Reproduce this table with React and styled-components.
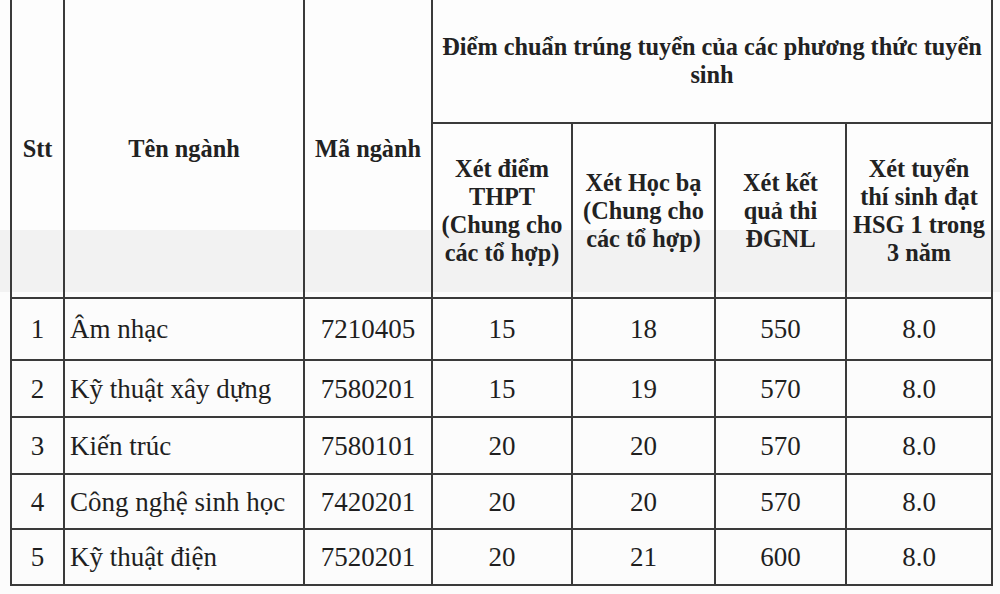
import React from "react";
import styled, { createGlobalStyle } from "styled-components";

const serif = `"Liberation Serif", "Times New Roman", serif`;

const Global = createGlobalStyle`
  html, body { margin: 0; padding: 0; }
  body {
    width: 1000px;
    height: 594px;
    overflow: hidden;
    background: linear-gradient(
      to bottom,
      #fdfdfd 0px,
      #fdfdfd 230px,
      #f2f2f2 230px,
      #f2f2f2 292px,
      #fcfcfc 292px,
      #fcfcfc 100%
    );
    font-family: ${serif};
    color: #1c1c1c;
  }
`;

const Page = styled.div`
  padding: 0 0 0 10px;
`;

const Table = styled.table`
  border-collapse: collapse;
  table-layout: fixed;
  width: 983px;
  margin-top: -2px;
  border: 2px solid #3a3a3a;
  font-family: ${serif};
`;

const HeadRow = styled.tr`
  height: ${(p) => p.$h}px;
`;

const HeadCell = styled.th`
  border: 2px solid #3a3a3a;
  font-family: ${serif};
  font-weight: 700;
  font-size: 24.3px;
  line-height: 28px;
  text-align: center;
  vertical-align: middle;
  padding: 0 2px;
  white-space: nowrap;
  color: #222;
`;

const Row = styled.tr`
  height: ${(p) => p.$h}px;
`;

const Cell = styled.td`
  border: 2px solid #3a3a3a;
  font-family: ${serif};
  font-size: 27px;
  line-height: 30px;
  text-align: ${(p) => (p.$left ? "left" : "center")};
  padding: ${(p) => (p.$left ? "0 0 0 5px" : "0")};
  vertical-align: middle;
  white-space: nowrap;
  color: #1f1f1f;
`;

const cols = [53, 240, 128, 140, 143, 131, 146];

const rows = [
  { h: 62, stt: "1", name: "Âm nhạc", code: "7210405", a: "15", b: "18", c: "550", d: "8.0" },
  { h: 57, stt: "2", name: "Kỹ thuật xây dựng", code: "7580201", a: "15", b: "19", c: "570", d: "8.0" },
  { h: 57, stt: "3", name: "Kiến trúc", code: "7580101", a: "20", b: "20", c: "570", d: "8.0" },
  { h: 55, stt: "4", name: "Công nghệ sinh học", code: "7420201", a: "20", b: "20", c: "570", d: "8.0" },
  { h: 56, stt: "5", name: "Kỹ thuật điện", code: "7520201", a: "20", b: "21", c: "600", d: "8.0" },
];

export default function App() {
  return (
    <>
      <Global />
      <Page>
        <Table>
          <colgroup>
            {cols.map((w, i) => (
              <col key={i} style={{ width: w }} />
            ))}
          </colgroup>
          <thead>
            <HeadRow $h={124}>
              <HeadCell rowSpan={2}>Stt</HeadCell>
              <HeadCell rowSpan={2}>Tên ngành</HeadCell>
              <HeadCell rowSpan={2}>Mã ngành</HeadCell>
              <HeadCell colSpan={4}>
                Điểm chuẩn trúng tuyển của các phương thức tuyển
                <br />
                sinh
              </HeadCell>
            </HeadRow>
            <HeadRow $h={175}>
              <HeadCell>
                Xét điểm
                <br />
                THPT
                <br />
                (Chung cho
                <br />
                các tổ hợp)
              </HeadCell>
              <HeadCell>
                Xét Học bạ
                <br />
                (Chung cho
                <br />
                các tổ hợp)
              </HeadCell>
              <HeadCell>
                Xét kết
                <br />
                quả thi
                <br />
                ĐGNL
              </HeadCell>
              <HeadCell>
                Xét tuyển
                <br />
                thí sinh đạt
                <br />
                HSG 1 trong
                <br />3 năm
              </HeadCell>
            </HeadRow>
          </thead>
          <tbody>
            {rows.map((r) => (
              <Row key={r.stt} $h={r.h}>
                <Cell>{r.stt}</Cell>
                <Cell $left>{r.name}</Cell>
                <Cell>{r.code}</Cell>
                <Cell>{r.a}</Cell>
                <Cell>{r.b}</Cell>
                <Cell>{r.c}</Cell>
                <Cell>{r.d}</Cell>
              </Row>
            ))}
          </tbody>
        </Table>
      </Page>
    </>
  );
}
